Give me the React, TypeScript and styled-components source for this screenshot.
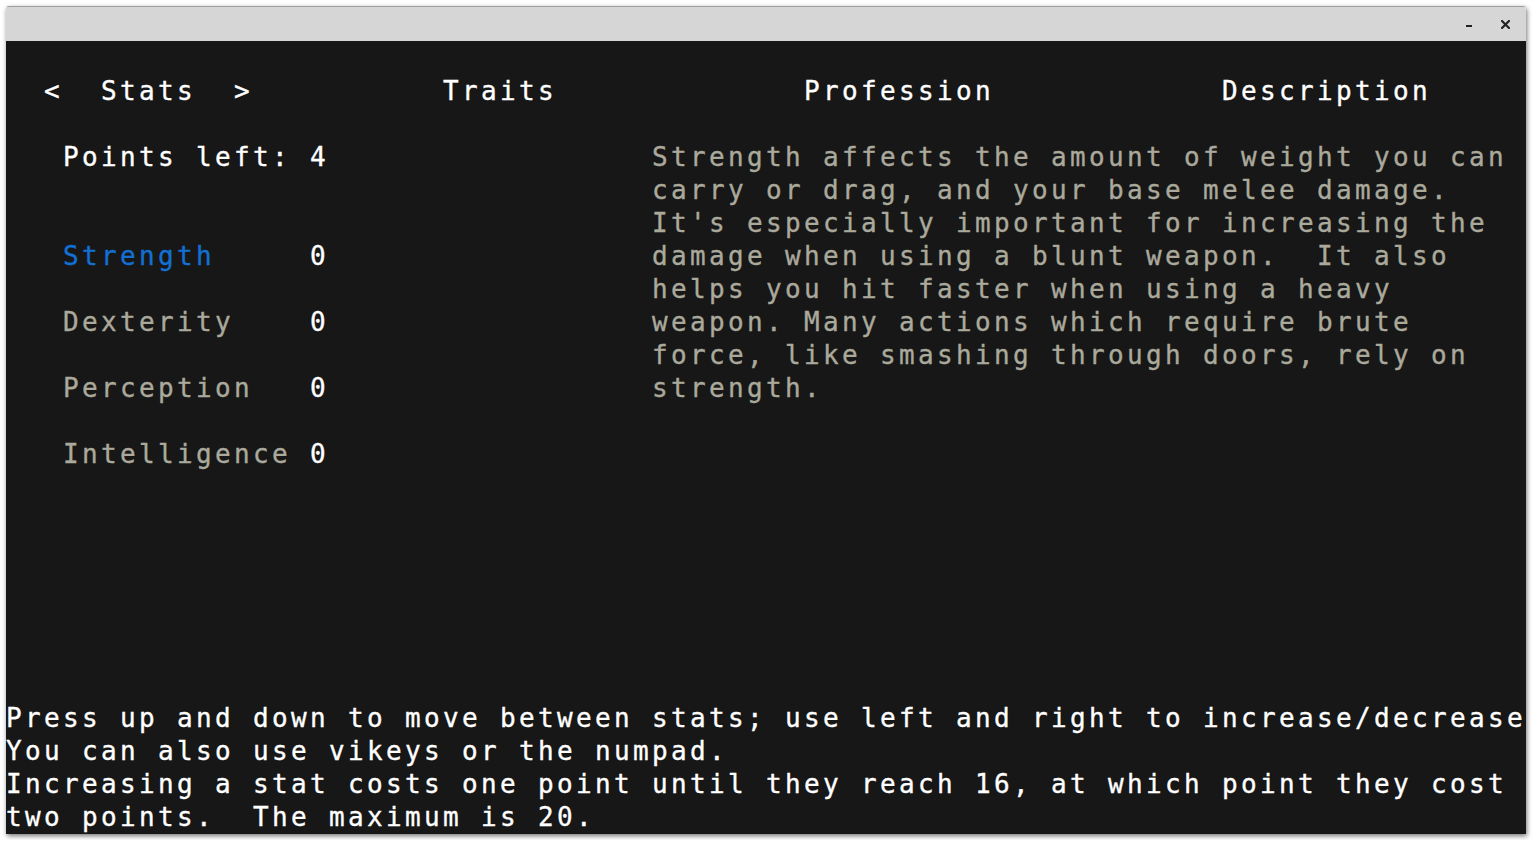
import React from 'react';
import styled, { createGlobalStyle } from 'styled-components';

const COLS = 80;
const ROWS = 24;
const CELL_W = 19;
const CELL_H = 33;

const GlobalStyle = createGlobalStyle`
  html, body {
    margin: 0;
    padding: 0;
    background: #ffffff;
  }
`;

const Page = styled.div`
  padding: 6px;
`;

const Window = styled.div`
  width: ${COLS * CELL_W}px;
  display: flex;
  flex-direction: column;
  border-radius: 3px 3px 0 0;
  box-shadow: 1px 2px 5px rgba(0, 0, 0, 0.55);
  overflow: hidden;
`;

const TitleBar = styled.div`
  height: 35px;
  box-sizing: border-box;
  background: #d6d6d6;
  border-top: 1px solid #a0a0a0;
  display: flex;
  align-items: center;
  justify-content: flex-end;
  gap: 22px;
  padding: 0 14px 0 0;
`;

const TitleButton = styled.div`
  width: 14px;
  height: 14px;
  display: flex;
  align-items: center;
  justify-content: center;
`;

const Terminal = styled.div`
  display: grid;
  grid-template-columns: repeat(${COLS}, ${CELL_W}px);
  grid-template-rows: repeat(${ROWS}, ${CELL_H}px);
  padding-top: 1px;
  background: #171717;
  font-family: 'DejaVu Sans Mono', 'Liberation Mono', monospace;
  font-size: 26px;
  line-height: ${CELL_H}px;
  letter-spacing: ${CELL_W - 0.6021 * 26}px;
`;

type Tone = 'white' | 'gray' | 'blue';

const toneColor: Record<Tone, string> = {
  white: '#ffffff',
  gray: '#aaa99c',
  blue: '#1370d2',
};

const Cell = styled.span<{ $tone: Tone }>`
  white-space: pre;
  overflow: visible;
  color: ${p => toneColor[p.$tone]};
  -webkit-text-stroke: 0.35px ${p => toneColor[p.$tone]};
`;

const Text = ({ row, col, tone = 'white', children }: { row: number; col: number; tone?: Tone; children: string }) => (
  <Cell
    $tone={tone}
    style={{ gridRow: row + 1, gridColumn: `${col + 1} / span ${children.length}` }}
  >
    {children}
  </Cell>
);

const stats = [
  { name: 'Strength', value: 0 },
  { name: 'Dexterity', value: 0 },
  { name: 'Perception', value: 0 },
  { name: 'Intelligence', value: 0 },
];

const description = [
  'Strength affects the amount of weight you can',
  'carry or drag, and your base melee damage.',
  "It's especially important for increasing the",
  'damage when using a blunt weapon.  It also',
  'helps you hit faster when using a heavy',
  'weapon. Many actions which require brute',
  'force, like smashing through doors, rely on',
  'strength.',
];

const help = [
  'Press up and down to move between stats; use left and right to increase/decrease',
  'You can also use vikeys or the numpad.',
  'Increasing a stat costs one point until they reach 16, at which point they cost',
  'two points.  The maximum is 20.',
];

export default function App() {
  const selected = 0;
  return (
    <>
      <GlobalStyle />
      <Page>
        <Window>
          <TitleBar>
            <TitleButton>
              <svg width="8" height="8" viewBox="0 0 8 8">
                <rect x="1" y="5" width="6" height="2" fill="#222" />
              </svg>
            </TitleButton>
            <TitleButton>
              <svg width="9" height="9" viewBox="0 0 9 9">
                <path d="M1 1 L8 8 M8 1 L1 8" stroke="#222" strokeWidth="2.2" strokeLinecap="square" />
              </svg>
            </TitleButton>
          </TitleBar>
          <Terminal>
            <Text row={1} col={2}>{'<'}</Text>
            <Text row={1} col={5}>Stats</Text>
            <Text row={1} col={12}>{'>'}</Text>
            <Text row={1} col={23}>Traits</Text>
            <Text row={1} col={42}>Profession</Text>
            <Text row={1} col={64}>Description</Text>

            <Text row={3} col={3}>Points left: 4</Text>

            {stats.map((s, i) => (
              <React.Fragment key={s.name}>
                <Text row={6 + i * 2} col={3} tone={i === selected ? 'blue' : 'gray'}>
                  {s.name}
                </Text>
                <Text row={6 + i * 2} col={16}>{String(s.value)}</Text>
              </React.Fragment>
            ))}

            {description.map((line, i) => (
              <Text key={i} row={3 + i} col={34} tone="gray">
                {line}
              </Text>
            ))}

            {help.map((line, i) => (
              <Text key={i} row={20 + i} col={0}>
                {line}
              </Text>
            ))}
          </Terminal>
        </Window>
      </Page>
    </>
  );
}
